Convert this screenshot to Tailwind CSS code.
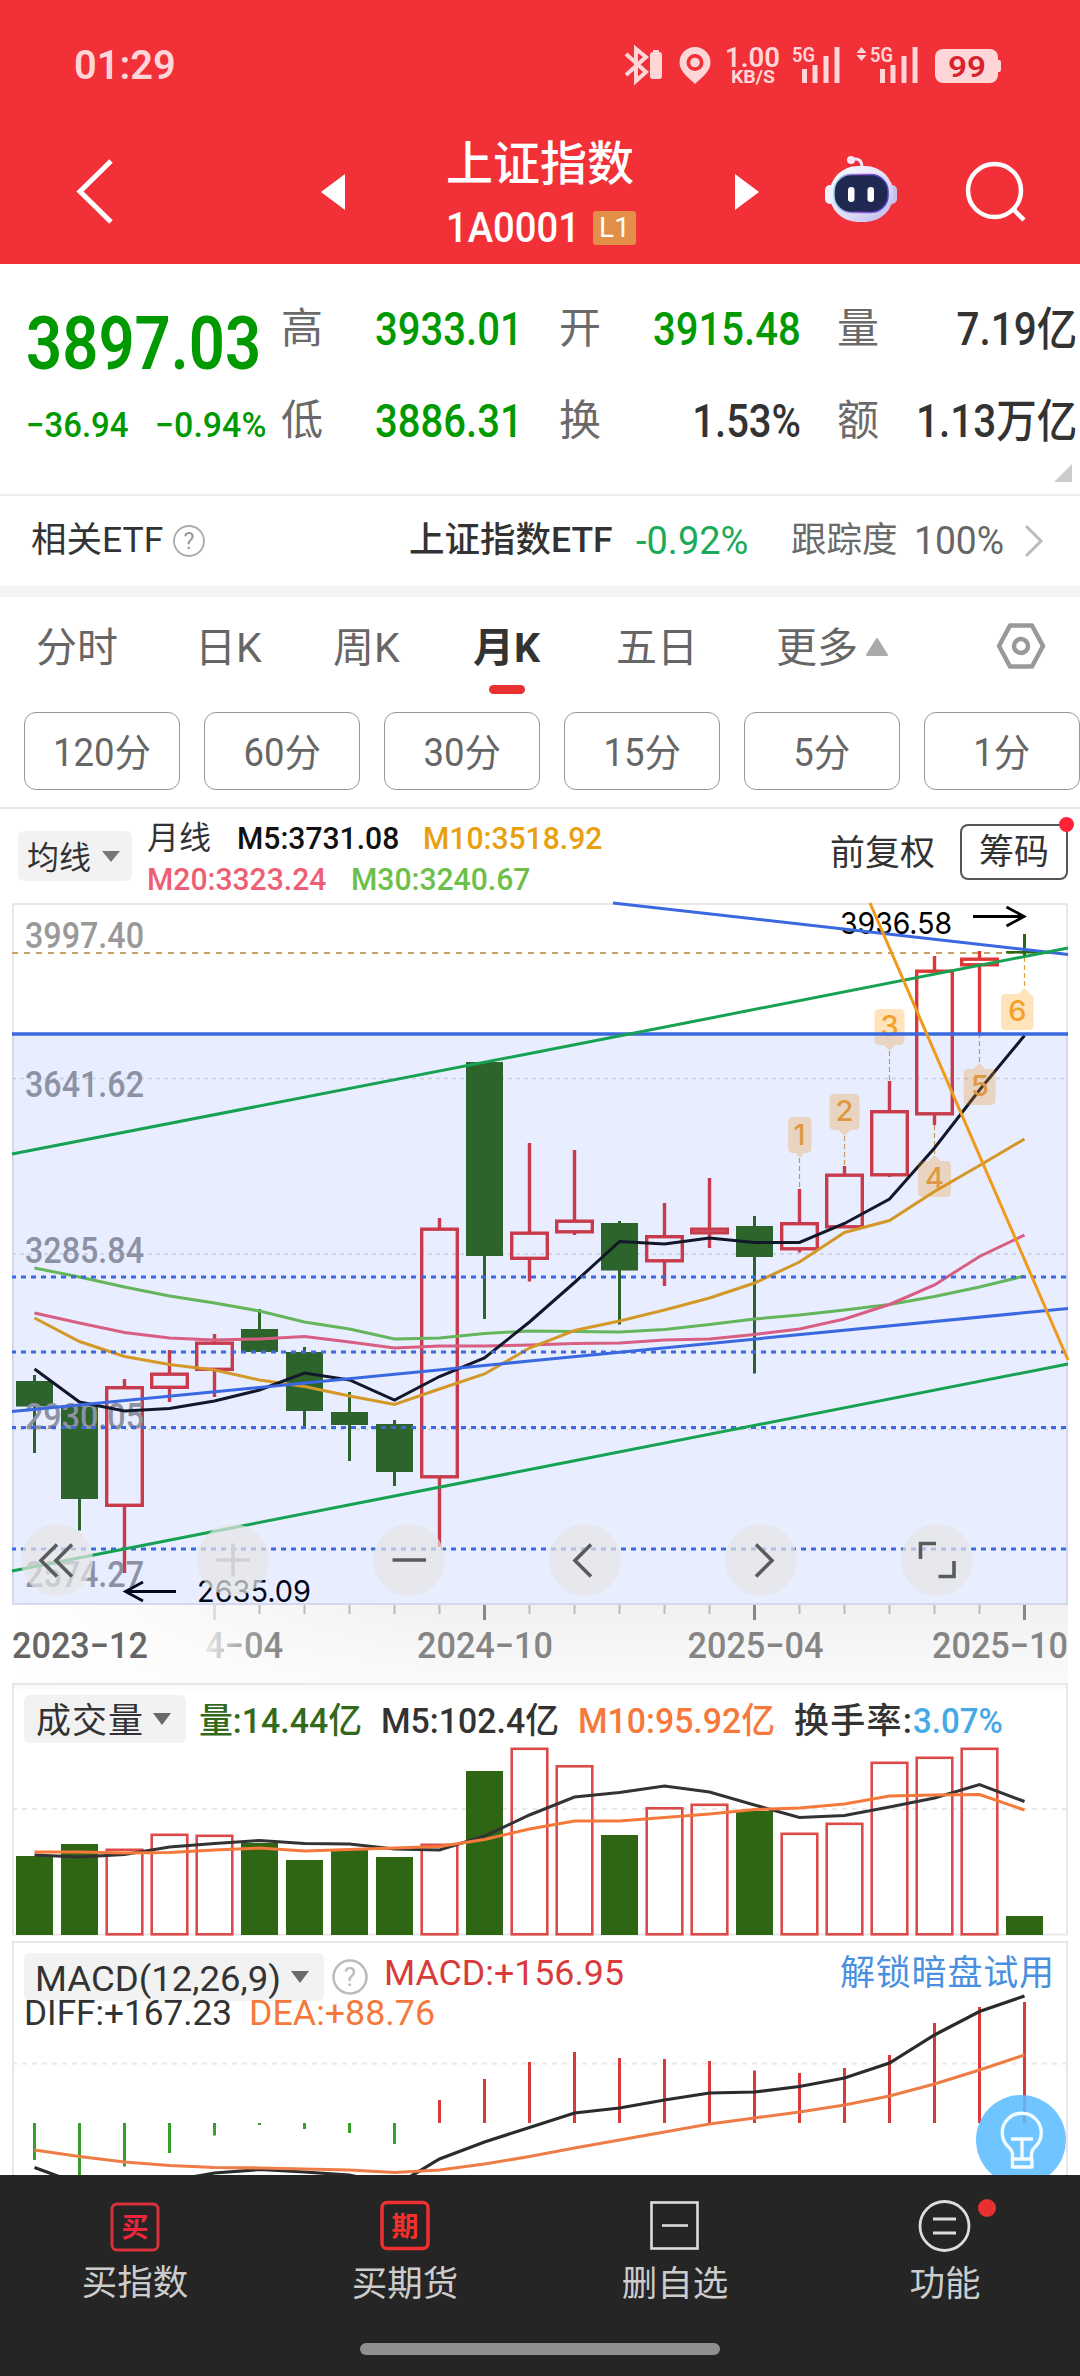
<!DOCTYPE html>
<html lang="zh-CN">
<head>
    <meta charset="UTF-8">
    <meta name="viewport" content="width=device-width, initial-scale=1.0">
    <title>上证指数 1A0001</title>
    <script src="https://cdn.jsdelivr.net/npm/@tailwindcss/browser@4"></script>
</head>
<body class="w-[1080px] h-[2376px] overflow-hidden flex flex-col bg-white text-[#333333] font-[Roboto,'Noto_Sans_CJK_SC',sans-serif] leading-none whitespace-nowrap">

    <!-- 顶部红色区域 -->
    <header class="h-[264px] shrink-0 bg-[#f23038] text-white flex flex-col">
        <div class="h-[130px] flex items-center justify-between pl-[74px] pr-[78px]">
            <span class="text-[41px] font-semibold text-[#ffd6d8] origin-left scale-x-[.97]">01:29</span>
            <svg class="w-[378px] h-[44px] overflow-visible" viewBox="624 43 378 44" fill="#ffd6d8">
                <path d="M626 54l20 18-10 9V49l10 8-20 18" fill="none" stroke="#ffd6d8" stroke-width="4"/>
                <rect x="650" y="52" width="12" height="27" rx="3"/>
                <rect x="653" y="50" width="6" height="4" rx="1"/>
                <path fill-rule="evenodd" d="M695 47a15.500 15.500 0 0 1 15.500 15.500c0 9-9 15-15.500 21.500c-6.500-6.500-15.500-12.500-15.500-21.500A15.500 15.500 0 0 1 695 47zm0 7a8.500 8.500 0 1 0 0 17a8.500 8.500 0 1 0 0-17z"/>
                <circle cx="695" cy="62.500" r="4.800"/>
                <text x="725" y="66.500" font-size="28" font-weight="600" textLength="55" lengthAdjust="spacingAndGlyphs">1.00</text>
                <text x="731" y="82.500" font-size="18" font-weight="700" textLength="44" lengthAdjust="spacingAndGlyphs">KB/S</text>
                <text x="792" y="62" font-size="21" font-weight="600" textLength="23" lengthAdjust="spacingAndGlyphs">5G</text>
                <path d="M802 69h5v14h-5zM812.500 65h5v18h-5zM823.500 56h5v27h-5zM834.500 47h5v36h-5z"/>
                <path d="M861.500 47l5 6h-10zM861.500 61l5-6h-10z"/>
                <text x="870" y="62" font-size="21" font-weight="600" textLength="23" lengthAdjust="spacingAndGlyphs">5G</text>
                <path d="M880 69h5v14h-5zM890.500 65h5v18h-5zM901.500 56h5v27h-5zM912.500 47h5v36h-5z"/>
                <rect x="935" y="49" width="63" height="34" rx="8"/>
                <rect x="996" y="60" width="5" height="12" rx="2"/>
                <text x="948" y="77" font-size="30" font-weight="600" fill="#d8232b" textLength="38" lengthAdjust="spacingAndGlyphs">99</text>
            </svg>
        </div>
        <div class="h-[124px] flex items-center">
            <svg class="w-[44px] h-[70px] ml-[73px]" viewBox="73 155 44 70"><path d="M111 159L80 189.500L111 220" fill="none" stroke="#fff" stroke-width="5"/></svg>
            <svg class="w-[26px] h-[38px] ml-[203px]" viewBox="320 173 26 38"><path d="M345 174v36L321 192z" fill="#fff"/></svg>
            <div class="w-[190px] ml-[100px] mt-[5px] flex flex-col">
                <span class="text-[47px] font-medium">上证指数</span>
                <div class="mt-[20px] flex items-center">
                    <span class="text-[42px] font-medium w-[147px] origin-left scale-x-[.91]">1A0001</span>
                    <span class="w-[43px] h-[34px] rounded-[3px] bg-[#e29048] text-[28px] flex items-center justify-center">L1</span>
                </div>
            </div>
            <svg class="w-[26px] h-[38px] ml-[98px]" viewBox="734 173 26 38"><path d="M735 174v36l24-18z" fill="#fff"/></svg>
            <!-- 机器人助手 -->
            <svg class="w-[76px] h-[70px] ml-[63px] mt-[-6px]" viewBox="823 154 76 70">
                <defs>
                    <linearGradient id="head" x1="0" y1="0" x2="1" y2="1"><stop offset="0" stop-color="#fff"/><stop offset=".6" stop-color="#dedcf6"/><stop offset="1" stop-color="#b9b4e8"/></linearGradient>
                    <linearGradient id="rim" x1="0" y1="0" x2="1" y2="0"><stop offset="0" stop-color="#9ad6ee"/><stop offset=".5" stop-color="#9a55e0"/><stop offset="1" stop-color="#4a3fd0"/></linearGradient>
                </defs>
                <path d="M851 160c8-3 11 1 11 8" fill="none" stroke="#f0e4f6" stroke-width="3"/>
                <circle cx="851" cy="160" r="4" fill="#f6e6f2"/>
                <rect x="825" y="185" width="10" height="19" rx="5" fill="#f3f1fd"/>
                <rect x="887" y="185" width="10" height="19" rx="5" fill="#c6c2ee"/>
                <rect x="829.500" y="166" width="64" height="56" rx="28" fill="url(#head)"/>
                <rect x="834" y="174.500" width="54" height="38" rx="17" fill="#1e2850" stroke="url(#rim)" stroke-width="1.500"/>
                <rect x="848" y="187" width="6.500" height="15" rx="3.200" fill="#fff"/>
                <rect x="867.500" y="187" width="6.500" height="15" rx="3.200" fill="#fff"/>
            </svg>
            <svg class="w-[64px] h-[64px] ml-[66px]" viewBox="965 160 64 64"><g fill="none" stroke="#fff" stroke-width="4.500"><circle cx="994.500" cy="190.500" r="26.500"/><path d="M1013 209l11 11"/></g></svg>
        </div>
    </header>

    <!-- 报价 -->
    <section class="h-[232px] shrink-0 flex relative border-b-2 border-[#eeeeee]">
        <div class="w-[281px] pl-[26px] pt-[42px] flex flex-col text-[#009900]">
            <span class="text-[75px] font-semibold origin-left scale-x-[.845]">3897.03</span>
            <div class="flex mt-[27px] text-[35px] font-medium">
                <span class="w-[129px] origin-left scale-x-[.94]">−36.94</span>
                <span class="origin-left scale-x-[.97]">−0.94%</span>
            </div>
        </div>
        <div class="pt-[19px] grid grid-cols-[242px_242px_240px] grid-rows-[92px_92px] gap-x-[36px] items-center text-[46px] font-medium">
            <div class="flex justify-between items-center"><span class="text-[42px] text-[#6a6a6a] font-normal">高</span><span class="text-[#009900] origin-right scale-x-[.87]">3933.01</span></div>
            <div class="flex justify-between items-center"><span class="text-[42px] text-[#6a6a6a] font-normal">开</span><span class="text-[#009900] origin-right scale-x-[.87]">3915.48</span></div>
            <div class="flex justify-between items-center"><span class="text-[42px] text-[#6a6a6a] font-normal">量</span><span class="origin-right scale-x-[.88]">7.19亿</span></div>
            <div class="flex justify-between items-center"><span class="text-[42px] text-[#6a6a6a] font-normal">低</span><span class="text-[#009900] origin-right scale-x-[.87]">3886.31</span></div>
            <div class="flex justify-between items-center"><span class="text-[42px] text-[#6a6a6a] font-normal">换</span><span class="origin-right scale-x-[.87]">1.53%</span></div>
            <div class="flex justify-between items-center"><span class="text-[42px] text-[#6a6a6a] font-normal">额</span><span class="origin-right scale-x-[.88]">1.13万亿</span></div>
        </div>
        <svg class="absolute right-[8px] bottom-[12px] w-[18px] h-[18px]" viewBox="0 0 18 18"><path d="M18 0v18H0z" fill="#cccccc"/></svg>
    </section>

    <!-- 相关ETF -->
    <section class="h-[101px] shrink-0 flex items-center justify-between pl-[31px] pr-[35px] text-[35.5px] border-b-[11px] border-[#f4f4f4]">
        <div class="flex items-center">
            <span class="w-[141px]">相关ETF</span>
            <svg class="w-[34px] h-[34px]" viewBox="0 0 34 34"><circle cx="17" cy="17" r="15" fill="none" stroke="#aaa" stroke-width="1.800"/><text x="17" y="25" font-size="23" fill="#999" text-anchor="middle">?</text></svg>
        </div>
        <div class="flex items-center">
            <span class="font-medium w-[227px]">上证指数ETF</span>
            <span class="w-[155px] text-[38px] text-[#1aab5a] origin-left">-0.92%</span>
            <span class="w-[123px] text-[#6a6a6a]">跟踪度</span>
            <span class="w-[109px] text-[38px] text-[#666666] origin-left scale-x-[.98]">100%</span>
            <svg class="w-[22px] h-[34px]" viewBox="0 0 22 34"><path d="M3 2l15 15L3 32" fill="none" stroke="#bbb" stroke-width="3"/></svg>
        </div>
    </section>

    <!-- 周期切换 -->
    <nav class="h-[107px] shrink-0 flex items-center pl-[36px] pb-[4px] text-[41px] text-[#666666] relative">
        <span class="w-[159px]">分时</span>
        <span class="w-[138px]">日K</span>
        <span class="w-[140px]">周K</span>
        <span class="w-[143px] font-bold text-[#333333]">月K</span>
        <span class="w-[160px]">五日</span>
        <span class="w-[89px]">更多</span>
        <svg class="w-[24px] h-[20px] mt-[-4px]" viewBox="0 0 24 20"><path d="M12 2L22 18H2z" fill="#aaa" stroke="#aaa" stroke-width="2" stroke-linejoin="round"/></svg>
        <svg class="w-[50px] h-[50px] mt-[-6px] ml-[107px]" viewBox="0 0 50 50"><g fill="none" stroke="#999" stroke-width="4.500" stroke-linejoin="round"><path d="M14 4.500h22L47 25 36 45.500H14L3 25z"/><circle cx="25" cy="25" r="7"/></g></svg>
        <i class="absolute left-[489px] bottom-[10px] w-[36px] h-[9px] rounded-full bg-[#e93030]"></i>
    </nav>
    <div class="h-[105px] shrink-0 pt-[8px] pl-[24px] flex gap-[24px] text-[38px] text-[#666666] border-b-2 border-[#e5e5e5] [&>span]:w-[156px] [&>span]:h-[78px] [&>span]:pt-[3px] [&>span]:shrink-0 [&>span]:flex [&>span]:items-center [&>span]:justify-center [&>span]:border [&>span]:border-[#999999] [&>span]:rounded-[12px]">
        <span><b class="font-normal scale-x-[.96]">120分</b></span>
        <span><b class="font-normal scale-x-[.96]">60分</b></span>
        <span><b class="font-normal scale-x-[.96]">30分</b></span>
        <span><b class="font-normal scale-x-[.96]">15分</b></span>
        <span><b class="font-normal scale-x-[.96]">5分</b></span>
        <span><b class="font-normal scale-x-[.96]">1分</b></span>
    </div>

    <!-- 均线 -->
    <div class="h-[88px] shrink-0 flex items-center pl-[18px]">
        <div class="w-[114px] h-[50px] mt-[6px] pt-[3px] rounded-[6px] bg-[#f2f2f2] flex items-center pl-[9px] text-[32px]">
            <span class="w-[74px]">均线</span>
            <svg class="w-[20px] h-[13px] mt-[-3px]" viewBox="0 0 20 13"><path d="M1 1h18l-9 11z" fill="#777"/></svg>
        </div>
        <div class="ml-[15px] mt-[10px] w-[683px] flex flex-col gap-[9px] text-[32px]">
            <div class="flex items-center h-[32px]">
                <span class="w-[90px]">月线</span>
                <span class="w-[186px] font-medium text-[#111111] origin-left scale-x-[.94]">M5:3731.08</span>
                <span class="font-medium text-[#e8a010] origin-left scale-x-[.94]">M10:3518.92</span>
            </div>
            <div class="flex items-center h-[32px] font-medium">
                <span class="w-[204px] text-[#ee5f75] origin-left scale-x-[.94]">M20:3323.24</span>
                <span class="text-[#6cc04a] origin-left scale-x-[.94]">M30:3240.67</span>
            </div>
        </div>
        <span class="w-[130px] text-[35px]">前复权</span>
        <div class="w-[108px] h-[56px] mt-[-2px] rounded-[8px] border-2 border-[#555555] flex items-center justify-center text-[35px] relative">筹码
            <i class="absolute right-[-8px] top-[-9px] w-[15px] h-[15px] rounded-full bg-[#ff2236]"></i>
        </div>
    </div>

    <!-- K线主图 -->
    <svg id="kline" class="w-[1080px] h-[784px] shrink-0 block" viewBox="0 897 1080 784">
        <defs>
            <linearGradient id="fade" gradientUnits="userSpaceOnUse" x1="202" y1="0" x2="290" y2="0"><stop offset="0" stop-color="#808080" stop-opacity=".08"/><stop offset=".5" stop-color="#808080" stop-opacity=".75"/><stop offset="1" stop-color="#808080"/></linearGradient>
            <linearGradient id="axisbg" x1="0" y1="0" x2="0" y2="1"><stop offset="0" stop-color="#f1f1f1"/><stop offset="1" stop-color="#fafafa"/></linearGradient>
            <linearGradient id="axisleft" x1="0" y1="0" x2="1" y2="0"><stop offset="0" stop-color="#fff"/><stop offset="1" stop-color="#fff" stop-opacity="0"/></linearGradient>
        </defs>
        <rect x="12" y="1605" width="1056" height="76" fill="url(#axisbg)"/>
        <rect x="12" y="1605" width="440" height="76" fill="url(#axisleft)"/>
        <rect x="13" y="904" width="1054" height="700" fill="#fff" stroke="#e8e8e8" stroke-width="2"/>
        <g stroke="#dcdcdc" stroke-width="1.500" stroke-dasharray="4 4">
            <path d="M12 1078.500H1068M12 1254H1068M12 1429.500H1068"/>
        </g>
        <path d="M12 953H1068" stroke="#c4a265" stroke-width="2" stroke-dasharray="6 6"/>
        <g id="candles"></g>
        <g font-size="36" fill="#999" font-weight="500">
            <text x="25" y="947.500" textLength="119" lengthAdjust="spacingAndGlyphs">3997.40</text>
            <text x="25" y="1096.500" textLength="119" lengthAdjust="spacingAndGlyphs">3641.62</text>
            <text x="25" y="1262.500" textLength="119" lengthAdjust="spacingAndGlyphs">3285.84</text>
            <text x="25" y="1429" textLength="119" lengthAdjust="spacingAndGlyphs">2930.05</text>
            <text x="25" y="1587" textLength="119" lengthAdjust="spacingAndGlyphs">2574.27</text>
        </g>
        <!-- 神奇九转 -->
        <g stroke="#e0a040" stroke-width="1.200" stroke-dasharray="5 3">
            <path d="M799.500 1158V1189M844.500 1136V1166M889.500 1051V1081M934.500 1125V1156M979.500 1033V1064M1024.500 957V988"/>
        </g>
        <g id="ma" fill="none" stroke-width="3"></g>
        <g fill="#ff9800" fill-opacity=".27">
            <path d="M793 1117h13.500q5 0 5 5v26q0 5-5 5h-2l-4.500 5-4.500-5h-2.500q-5 0-5-5v-26q0-5 5-5z"/>
            <path d="M834.500 1094h20q5 0 5 5v26q0 5-5 5h-4l-6 6-6-6h-4q-5 0-5-5v-26q0-5 5-5z"/>
            <path d="M879.500 1009h20q5 0 5 5v26q0 5-5 5h-4l-6 6-6-6h-4q-5 0-5-5v-26q0-5 5-5z"/>
            <path d="M923 1161h5.500l6-6 6 6h5.500q5 0 5 5v26q0 5-5 5h-23q-5 0-5-5v-26q0-5 5-5z"/>
            <path d="M968.500 1069h5l6-6 6 6h5q5 0 5 5v26q0 5-5 5h-22q-5 0-5-5v-26q0-5 5-5z"/>
            <path d="M1006 994h12.500l6-6 6 6q3 1 3 5v26q0 5-5 5h-22.500q-5 0-5-5v-26q0-5 5-5z"/>
        </g>
        <g font-size="29" font-weight="500" fill="#f5a02a" text-anchor="middle" class="font-[Inter]">
            <text x="799.500" y="1144.500">1</text>
            <text x="844.500" y="1121">2</text>
            <text x="889.500" y="1036">3</text>
            <text x="934.500" y="1188">4</text>
            <text x="980" y="1096">5</text>
            <text x="1017.500" y="1021">6</text>
        </g>
        <g class="font-[Inter]" font-size="30" fill="#000">
            <text x="840" y="934" textLength="112" lengthAdjust="spacingAndGlyphs">3936.58</text>
            <text x="197" y="1601.500" textLength="114" lengthAdjust="spacingAndGlyphs">2635.09</text>
        </g>
        <g fill="none" stroke="#000" stroke-width="2.800">
            <path d="M973 916.500H1024M1006.500 907l17.500 9.500-17.500 9.500M176 1591.500H126M143 1582l-17.500 9.500 17.500 9.500"/>
        </g>
        <!-- 区间底色 -->
        <rect x="12" y="1034" width="1056" height="571" fill="#1955ff" fill-opacity=".1"/>
        <!-- 画线 -->
        <g fill="none" stroke="#3a68e0" stroke-width="3">
            <path d="M12 1034H1068" stroke-width="3.600"/>
            <path d="M613 903L1068 954.500M12 1411.500L540 1360L1068 1308.500"/>
            <path d="M12 1277H1068M12 1352H1068M12 1427.500H1068M12 1549H1068" stroke-dasharray="5 5" stroke-dashoffset="1"/>
        </g>
        <path d="M12 1154L540 1051.500L1068 948M12 1571L540 1467.500L1068 1364" fill="none" stroke="#17a253" stroke-width="3"/>
        <path d="M870 903L1068 1360" stroke="#f09a1c" stroke-width="3"/>
        <!-- 时间轴 -->
        <path id="ticks" stroke="#bbb" stroke-width="2"/>
        <path d="M214.500 1605v15" stroke="#ddd" stroke-width="3"/>
        <path d="M484.500 1605v15M754.500 1605v15M1024.500 1605v15" stroke="#888" stroke-width="3"/>
        <g font-size="36.500" font-weight="500" fill="#858585">
            <text x="205" y="1658" fill="url(#fade)" textLength="78" lengthAdjust="spacingAndGlyphs">4−04</text>
            <text x="417" y="1658" textLength="136" lengthAdjust="spacingAndGlyphs">2024−10</text>
            <text x="687.500" y="1658" textLength="136" lengthAdjust="spacingAndGlyphs">2025−04</text>
            <text x="932" y="1658" textLength="136" lengthAdjust="spacingAndGlyphs">2025−10</text>
            <text x="12" y="1658" fill="#666" textLength="136" lengthAdjust="spacingAndGlyphs">2023−12</text>
        </g>
        <!-- 操作按钮 -->
        <g fill="#e5e5e5" fill-opacity=".7">
            <circle cx="57" cy="1560" r="36"/><circle cx="233" cy="1560" r="36"/><circle cx="409" cy="1560" r="36"/>
            <circle cx="585" cy="1560" r="36"/><circle cx="761" cy="1560" r="36"/><circle cx="937" cy="1560" r="36"/>
        </g>
        <g fill="none" stroke="#5a5b5f" stroke-width="3.600">
            <path d="M57 1544.500L41 1560.500l16 16M72 1544.500L56 1560.500l16 16"/>
            <path d="M216 1560h34M233 1543.500v33" stroke="#d0d1d4"/>
            <path d="M392.500 1560h33.500"/>
            <path d="M591 1544.500L575 1560.500l16 16M756 1544.500l16 16-16 16"/>
            <path d="M920.500 1559v-15.500h15.500M954 1561v15.500h-15.500"/>
        </g>
    </svg>

    <!-- 成交量 -->
    <svg id="volume" class="w-[1080px] h-[256px] shrink-0 block" viewBox="0 1681 1080 256">
        <rect x="12" y="1681" width="1056" height="8" fill="#fafafa"/>
        <rect x="13" y="1684" width="1054" height="250.500" fill="none" stroke="#e8e8e8" stroke-width="2"/>
        <path d="M12 1809H1068" stroke="#e8e8e8" stroke-width="2" stroke-dasharray="5 5"/>
        <rect x="24" y="1695" width="162" height="48" rx="6" fill="#f2f2f2"/>
        <path d="M153 1713h18l-9 12z" fill="#6a6a6a"/>
        <g font-size="35" font-weight="500">
            <text x="36" y="1733" fill="#333" font-weight="400" textLength="107">成交量</text>
            <text x="199" y="1732.500" fill="#33691a" textLength="163" lengthAdjust="spacingAndGlyphs">量:14.44亿</text>
            <text x="381" y="1732.500" fill="#333" textLength="178" lengthAdjust="spacingAndGlyphs">M5:102.4亿</text>
            <text x="578" y="1732.500" fill="#f5793b" textLength="197" lengthAdjust="spacingAndGlyphs">M10:95.92亿</text>
            <text x="794" y="1732.500" fill="#333" textLength="118">换手率:</text>
            <text x="913" y="1732.500" fill="#45a9e6" textLength="90" lengthAdjust="spacingAndGlyphs">3.07%</text>
        </g>
        <g id="bars"></g>
        <g id="volma" fill="none" stroke-width="3"></g>
    </svg>

    <!-- MACD -->
    <svg id="macd" class="w-[1080px] h-[238px] shrink-0 block" viewBox="0 1937 1080 238">
        <path d="M13 2176V1942H1067V2176" fill="none" stroke="#e8e8e8" stroke-width="2"/>
        <path d="M12 2063.500H1068" stroke="#e8e8e8" stroke-width="2" stroke-dasharray="5 5"/>
        <rect x="24" y="1953" width="300" height="48" rx="6" fill="#f2f2f2"/>
        <path d="M291 1971h18l-9 12z" fill="#6a6a6a"/>
        <circle cx="350" cy="1977" r="16.500" fill="none" stroke="#bbb" stroke-width="2.500"/>
        <text x="350" y="1986" font-size="26" fill="#bbb" text-anchor="middle">?</text>
        <g font-size="35">
            <text x="35" y="1991" fill="#333" textLength="246" lengthAdjust="spacingAndGlyphs">MACD(12,26,9)</text>
            <text x="384" y="1984.500" fill="#d93a3a" textLength="240" lengthAdjust="spacingAndGlyphs">MACD:+156.95</text>
            <text x="840" y="1985" fill="#4a90e0" textLength="214">解锁暗盘试用</text>
            <text x="24" y="2024.500" fill="#333" textLength="208" lengthAdjust="spacingAndGlyphs">DIFF:+167.23</text>
            <text x="249" y="2024.500" fill="#f5793b" textLength="186" lengthAdjust="spacingAndGlyphs">DEA:+88.76</text>
        </g>
        <g id="hist" stroke-width="3"></g>
        <g id="macdlines" fill="none" stroke-width="3.200"></g>
        <circle cx="1021" cy="2140" r="45" fill="#5cbcff" fill-opacity=".88"/>
        <g fill="none" stroke="#f2fbff" stroke-width="3.400" stroke-linejoin="round">
            <path d="M1012.500 2159v-6q-1.500-4-4-6a19.500 19.500 0 1 1 26.500 0q-2.500 2-3.500 6v6z"/>
            <path d="M1012.500 2159v8h19.500v-8M1011 2139h22M1022 2139v20"/>
        </g>
    </svg>

    <!-- 底部导航 -->
    <footer class="h-[201px] shrink-0 bg-[#252525] text-[#cccccc] text-[35.5px] flex flex-col items-center">
        <div class="w-full grid grid-cols-4 pt-[24px] h-[168px]">
            <div class="flex flex-col items-center gap-[13px]">
                <svg class="w-[54px] h-[54px]" viewBox="0 0 54 54"><rect x="4" y="5" width="46" height="46" rx="5" fill="none" stroke="#d8323c" stroke-width="3"/><text x="27" y="38" font-size="27" font-weight="700" fill="#f0253c" text-anchor="middle">买</text></svg>
                <span>买指数</span>
            </div>
            <div class="flex flex-col items-center gap-[14px]">
                <svg class="w-[54px] h-[54px]" viewBox="0 0 54 54"><rect x="4" y="3.500" width="46" height="46" rx="5" fill="none" stroke="#f03030" stroke-width="3.500"/><text x="27" y="36.500" font-size="27" font-weight="700" fill="#f5302c" text-anchor="middle">期</text></svg>
                <span>买期货</span>
            </div>
            <div class="flex flex-col items-center gap-[14px]">
                <svg class="w-[54px] h-[54px]" viewBox="0 0 54 54"><g fill="none" stroke="#dddddd" stroke-width="2.600"><rect x="3.500" y="3.500" width="46" height="46"/><path d="M14 26.500h26"/></g></svg>
                <span>删自选</span>
            </div>
            <div class="flex flex-col items-center gap-[14px] relative">
                <svg class="w-[54px] h-[54px]" viewBox="0 0 54 54"><g fill="none" stroke="#dddddd" stroke-width="2.800"><circle cx="26.500" cy="27" r="24.500"/><path d="M15 20h23M15 34h23"/></g></svg>
                <span>功能</span>
                <i class="absolute left-[168px] top-0 w-[18px] h-[18px] rounded-full bg-[#e83030]"></i>
            </div>
        </div>
        <div class="w-[360px] h-[12px] rounded-full bg-[#909090]"></div>
    </footer>

    <script>
        const X0 = 34.5, STEP = 45;
        const GREEN = '#2f6613', RED = '#dc3838';

        // 每根K线：[方向, 实体上, 实体下, 最高, 最低]
        const candles = [
            ['d', 1381, 1406.5, 1375, 1453], ['d', 1406.5, 1499, 1406, 1530.5], ['u', 1386, 1507, 1379, 1573],
            ['u', 1372.5, 1389, 1350, 1402], ['u', 1341.5, 1371, 1334, 1397], ['d', 1329, 1352, 1309, 1352],
            ['d', 1352, 1411, 1347, 1427], ['d', 1412, 1425, 1392, 1461], ['d', 1424, 1472, 1420, 1486],
            ['u', 1227.5, 1478.5, 1218, 1547], ['d', 1062, 1256, 1062, 1319], ['u', 1231.5, 1260, 1143, 1281.5],
            ['u', 1219.5, 1233.5, 1150, 1235], ['d', 1223, 1270.5, 1221, 1324.5], ['u', 1235, 1262.5, 1203, 1286],
            ['u', 1227.5, 1234.5, 1178, 1248], ['d', 1226, 1257, 1216, 1373.5], ['u', 1222, 1250.5, 1189, 1252.5],
            ['u', 1173.5, 1228.5, 1166, 1228], ['u', 1110, 1176.5, 1081, 1177], ['u', 969.5, 1115.5, 956, 1125],
            ['u', 957.5, 966.5, 951, 1033], ['d', 951, 953.5, 934, 957]
        ];
        const maLines = [
            ['#6cc04a', [1268, 1277, 1287, 1296, 1303, 1311, 1322, 1329, 1339, 1338, 1333.5, 1331, 1331.5, 1332, 1329.5, 1324.5, 1319, 1315, 1310, 1304.5, 1296.5, 1287, 1276]],
            ['#ee5f75', [1313, 1323, 1332.5, 1338, 1340, 1339, 1336.5, 1342, 1348, 1346, 1346, 1345, 1343.5, 1343, 1340, 1339, 1334.5, 1329, 1319, 1304.5, 1285, 1256.5, 1235]],
            ['#e8a010', [1318, 1341.5, 1356.5, 1364.5, 1370, 1380, 1386.5, 1396, 1404.5, 1389, 1374, 1348, 1330.5, 1321, 1310, 1298, 1283, 1262, 1232.5, 1220.5, 1191.5, 1165.5, 1139]],
            ['#111111', [1369, 1402, 1411, 1408.5, 1401, 1390, 1373, 1380, 1400, 1376.5, 1358, 1322, 1282.5, 1241.5, 1244, 1238, 1242.5, 1242.5, 1223.5, 1199, 1148, 1090, 1035.5]]
        ];
        const volumes = [1856, 1844, 1848.5, 1833.5, 1834.5, 1843, 1860, 1850, 1857, 1843.5, 1771, 1747.5, 1765, 1835, 1807, 1803.5, 1811, 1832.5, 1822.5, 1761.5, 1756.5, 1747.5, 1916];
        const volLines = [
            ['#333333', [1855, 1857, 1854.5, 1847, 1843.5, 1840.5, 1843.5, 1844, 1849, 1850, 1836, 1815, 1797, 1792.5, 1786, 1792, 1805, 1817.5, 1815.5, 1807, 1798, 1784.5, 1801.5]],
            ['#f5793b', [1852, 1852, 1853, 1852.5, 1850, 1848, 1851, 1849.5, 1848, 1846.5, 1839.5, 1829, 1821, 1821, 1817.5, 1814, 1809.5, 1808, 1804, 1796, 1795, 1794.5, 1810]]
        ];
        const hist = [2160, 2180, 2166.5, 2153, 2135.5, 2125, 2129, 2133, 2144, 2100, 2079, 2062, 2052, 2058, 2059, 2061, 2070.5, 2073, 2068, 2055, 2023, 2007, 2002];
        const macdLines = [
            ['#2b2b2b', [2167.5, 2184, 2188, 2181, 2173, 2169.5, 2172, 2175, 2186, 2159, 2142, 2127.5, 2113, 2108, 2100, 2093, 2092, 2086.5, 2078, 2063, 2035, 2011.5, 1996]],
            ['#ee7c46', [2150, 2156.5, 2162, 2165.5, 2167.5, 2168, 2169, 2170, 2172.5, 2170, 2164, 2156.5, 2148, 2140, 2132, 2124, 2118, 2112, 2105, 2096, 2084, 2070, 2055]]
        ];

        const cx = i => X0 + STEP * i;

        function drawLines(id, lines) {
            document.getElementById(id).innerHTML = lines.map(([color, ys]) =>
                `<polyline stroke="${color}" points="${ys.map((y, i) => cx(i) + ',' + y).join(' ')}"/>`
            ).join('');
        }

        document.getElementById('candles').innerHTML = candles.map(([dir, top, bottom, high, low], i) => {
            const x = cx(i);
            if (dir === 'd') {
                return `<rect x="${x - 18.5}" y="${top}" width="37" height="${bottom - top}" fill="${GREEN}"/>
                        <path d="M${x} ${high}V${low}" stroke="${GREEN}" stroke-width="3"/>`;
            }
            return `<rect x="${x - 17.8}" y="${top + 1.7}" width="35.6" height="${bottom - top - 3.4}" fill="none" stroke="${RED}" stroke-width="3.4"/>
                    <path d="M${x} ${high}V${top + 1}M${x} ${bottom - 1}V${low}" stroke="${RED}" stroke-width="3.4"/>`;
        }).join('');

        document.getElementById('bars').innerHTML = volumes.map((y, i) => candles[i][0] === 'd'
            ? `<rect x="${cx(i) - 18.5}" y="${y}" width="37" height="${1935 - y}" fill="${GREEN}"/>`
            : `<rect x="${cx(i) - 17.8}" y="${y + 1.3}" width="35.6" height="${1935 - y - 2}" fill="none" stroke="#dc4a4a" stroke-width="2.6"/>`
        ).join('');

        document.getElementById('hist').innerHTML = hist.map((y, i) =>
            `<path d="M${cx(i)} 2123V${y}" stroke="${y > 2123 ? '#35a02c' : '#d63a3a'}"/>`
        ).join('');

        // 小刻度
        document.getElementById('ticks').setAttribute('d',
            candles.map((c, i) => i > 4 && i % 6 !== 4 ? `M${cx(i)} 1605v9` : '').join(''));

        drawLines('ma', maLines);
        drawLines('volma', volLines);
        drawLines('macdlines', macdLines);
    </script>
</body>
</html>
